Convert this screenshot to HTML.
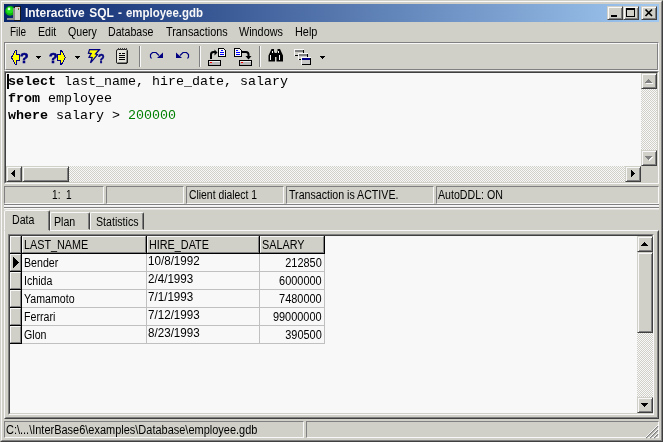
<!DOCTYPE html>
<html><head><meta charset="utf-8"><title>Interactive SQL - employee.gdb</title>
<style>
html,body{margin:0;padding:0;}
body{width:663px;height:442px;overflow:hidden;background:#d0d0c8;position:relative;font-family:"Liberation Sans",sans-serif;font-size:12.5px;color:#000;}
.a{position:absolute;box-sizing:border-box;}
.tx{position:absolute;white-space:nowrap;transform-origin:0 0;line-height:14px;height:14px;}
.chk{background-color:#d0d0c8;background-image:linear-gradient(45deg,#f8f8f8 25%,transparent 25%,transparent 75%,#f8f8f8 75%),linear-gradient(45deg,#f8f8f8 25%,transparent 25%,transparent 75%,#f8f8f8 75%);background-size:2px 2px;background-position:0 0,1px 1px;}
.btn{background:#d0d0c8;border:1px solid;border-color:#d0d0c8 #404040 #404040 #d0d0c8;box-shadow:inset 1px 1px 0 #f8f8f8,inset -1px -1px 0 #808080;}
.pan{border:1px solid;border-color:#808080 #f8f8f8 #f8f8f8 #808080;}
.mono{font-family:"Liberation Mono",monospace;font-size:13.333px;line-height:17px;white-space:pre;position:absolute;left:8px;}
.cell{position:absolute;height:17px;}
</style></head><body><div id="root" style="position:absolute;left:0;top:0;width:663px;height:442px;will-change:transform;">
<!-- window frame -->
<div class="a" style="left:0;top:0;width:663px;height:442px;border:1px solid;border-color:#d0d0c8 #404040 #404040 #d0d0c8;"></div>
<div class="a" style="left:1px;top:1px;width:661px;height:440px;border:1px solid;border-color:#f8f8f8 #808080 #808080 #f8f8f8;"></div>
<!-- title bar -->
<div class="a" style="left:4px;top:4px;width:655px;height:18px;background:linear-gradient(90deg,#08246a 0%,#a0c8f0 100%);"></div>
<div class="tx" id="title" style="left:24.8px;top:6px;color:#f8f8f8;font-weight:bold;transform:scaleX(.955);word-spacing:1.2px;">Interactive SQL -</div><div class="tx" id="title2" style="left:126px;top:6px;color:#f8f8f8;font-weight:bold;transform:scaleX(.915);">employee.gdb</div>
<div class="a btn" style="left:607px;top:6px;width:16px;height:14px;"></div>
<div class="a btn" style="left:623px;top:6px;width:16px;height:14px;"></div>
<div class="a btn" style="left:641px;top:6px;width:16px;height:14px;"></div>
<!-- menu -->
<div class="tx" id="m1" style="left:10.3px;top:25px;transform:scaleX(.8);">File</div>
<div class="tx" id="m2" style="left:38px;top:25px;transform:scaleX(.85);">Edit</div>
<div class="tx" id="m3" style="left:68px;top:25px;transform:scaleX(.85);">Query</div>
<div class="tx" id="m4" style="left:108px;top:25px;transform:scaleX(.85);">Database</div>
<div class="tx" id="m5" style="left:166px;top:25px;transform:scaleX(.868);">Transactions</div>
<div class="tx" id="m6" style="left:239px;top:25px;transform:scaleX(.865);">Windows</div>
<div class="tx" id="m7" style="left:295px;top:25px;transform:scaleX(.87);">Help</div>
<!-- toolbar frame -->
<div class="a" style="left:4px;top:42px;width:655px;height:29px;border:1px solid;border-color:#808080 #f8f8f8 #f8f8f8 #808080;"></div>
<div class="a" style="left:5px;top:43px;width:653px;height:27px;border:1px solid;border-color:#f8f8f8 #808080 #808080 #f8f8f8;"></div>
<!-- toolbar separators -->
<div class="a" style="left:139px;top:46px;width:2px;height:21px;border-left:1px solid #808080;border-right:1px solid #f8f8f8;"></div>
<div class="a" style="left:199px;top:46px;width:2px;height:21px;border-left:1px solid #808080;border-right:1px solid #f8f8f8;"></div>
<div class="a" style="left:259px;top:46px;width:2px;height:21px;border-left:1px solid #808080;border-right:1px solid #f8f8f8;"></div>
<!-- editor -->
<div class="a" style="left:4px;top:71px;width:655px;height:113px;border:1px solid;border-color:#808080 #f8f8f8 #f8f8f8 #808080;"></div>
<div class="a" style="left:5px;top:72px;width:653px;height:111px;border:1px solid;border-color:#404040 #d0d0c8 #d0d0c8 #404040;background:#f8f8f8;"></div>
<div class="a" style="left:7px;top:74px;width:2px;height:15px;background:#000;"></div>
<div class="mono" id="c1" style="top:73px;"><b>select</b> last_name, hire_date, salary</div>
<div class="mono" id="c2" style="top:90px;"><b>from</b> employee</div>
<div class="mono" id="c3" style="top:107px;"><b>where</b> salary &gt; <span style="color:#008000">200000</span></div>
<!-- editor v scroll -->
<div class="a chk" style="left:641px;top:73px;width:16px;height:93px;"></div>
<div class="a btn" style="left:641px;top:73px;width:16px;height:16px;"></div>
<div class="a btn" style="left:641px;top:150px;width:16px;height:16px;"></div>
<!-- editor h scroll -->
<div class="a chk" style="left:6px;top:166px;width:635px;height:16px;"></div>
<div class="a btn" style="left:6px;top:166px;width:16px;height:16px;"></div>
<div class="a btn" style="left:22px;top:166px;width:47px;height:16px;"></div>
<div class="a btn" style="left:625px;top:166px;width:16px;height:16px;"></div>
<div class="a" style="left:641px;top:166px;width:16px;height:16px;background:#d0d0c8;"></div>
<!-- status bar 1 -->
<div class="a pan" style="left:4px;top:186px;width:100px;height:18px;"></div>
<div class="a pan" style="left:106px;top:186px;width:78px;height:18px;"></div>
<div class="a pan" style="left:186px;top:186px;width:98px;height:18px;"></div>
<div class="a pan" style="left:286px;top:186px;width:148px;height:18px;"></div>
<div class="a pan" style="left:436px;top:186px;width:223px;height:18px;"></div>
<div class="tx" id="s1" style="left:51.5px;top:188px;transform:scaleX(.81);">1:&nbsp; 1</div>
<div class="tx" id="s2" style="left:189px;top:188px;transform:scaleX(.83);">Client dialect 1</div>
<div class="tx" id="s3" style="left:289px;top:188px;transform:scaleX(.85);">Transaction is ACTIVE.</div>
<div class="tx" id="s4" style="left:438px;top:188px;transform:scaleX(.85);">AutoDDL: ON</div>
<!-- splitter lines -->
<div class="a" style="left:4px;top:204px;width:655px;height:2px;border-top:1px solid #808080;border-bottom:1px solid #f8f8f8;"></div>
<div class="a" style="left:4px;top:206px;width:655px;height:3px;background:#f0f0ee;border-top:0;"></div>
<div class="a" style="left:4px;top:207px;width:655px;height:1px;background:#808080;"></div>
<div class="a" style="left:4px;top:208px;width:655px;height:1px;background:#f8f8f8;"></div><div class="a" style="left:4px;top:209px;width:655px;height:1px;background:#e4e2dc;"></div>
<!-- tab page -->
<div class="a" style="left:4px;top:230px;width:655px;height:189px;border:1px solid;border-color:#f8f8f8 #404040 #404040 #f8f8f8;"></div>
<div class="a" style="left:5px;top:231px;width:653px;height:187px;border:1px solid;border-color:#d0d0c8 #808080 #808080 #d0d0c8;"></div>
<!-- tabs -->
<div class="a" style="left:50px;top:212px;width:40px;height:18px;border:1px solid;border-color:#f8f8f8 #404040 transparent #f8f8f8;border-radius:2px 2px 0 0;box-shadow:inset -1px 0 0 #808080;"></div>
<div class="a" style="left:90px;top:212px;width:54px;height:18px;border:1px solid;border-color:#f8f8f8 #404040 transparent #f8f8f8;border-radius:2px 2px 0 0;box-shadow:inset -1px 0 0 #808080;"></div>
<div class="a" style="left:4px;top:210px;width:46px;height:21px;background:#d0d0c8;border:1px solid;border-color:#f8f8f8 #404040 transparent #f8f8f8;border-radius:2px 2px 0 0;box-shadow:inset -1px 0 0 #808080;"></div>
<div class="tx" id="t1" style="left:12px;top:213px;transform:scaleX(.85);">Data</div>
<div class="tx" id="t2" style="left:54.3px;top:215px;transform:scaleX(.85);">Plan</div>
<div class="tx" id="t3" style="left:96px;top:215px;transform:scaleX(.85);">Statistics</div>
<!-- grid -->
<div class="a" style="left:8px;top:234px;width:646px;height:181px;border:1px solid;border-color:#808080 #f8f8f8 #f8f8f8 #808080;"></div>
<div class="a" style="left:9px;top:235px;width:644px;height:179px;border:1px solid;border-color:#404040 #d0d0c8 #d0d0c8 #404040;background:#f8f8f8;"></div>
<!-- grid vscroll -->
<div class="a chk" style="left:637px;top:236px;width:16px;height:177px;"></div>
<div class="a btn" style="left:637px;top:236px;width:16px;height:16px;"></div>
<div class="a btn" style="left:637px;top:252px;width:16px;height:81px;"></div>
<div class="a btn" style="left:637px;top:397px;width:16px;height:16px;"></div>
<!-- grid header -->
<div id="grid"><div class="a" style="left:10px;top:236px;width:11px;height:17px;background:#d0d0c8;border:1px solid;border-color:#f8f8f8 #808080 #808080 #f8f8f8;box-shadow:1px 0 0 #000,0 1px 0 #000,1px 1px 0 #000;"></div>
<div class="a" style="left:22px;top:236px;width:124px;height:17px;background:#d0d0c8;border:1px solid;border-color:#f8f8f8 #808080 #808080 #f8f8f8;box-shadow:1px 0 0 #000,0 1px 0 #000,1px 1px 0 #000;"></div>
<div class="tx" id="h0" style="left:24px;top:238px;transform:scaleX(.865);">LAST_NAME</div>
<div class="a" style="left:147px;top:236px;width:112px;height:17px;background:#d0d0c8;border:1px solid;border-color:#f8f8f8 #808080 #808080 #f8f8f8;box-shadow:1px 0 0 #000,0 1px 0 #000,1px 1px 0 #000;"></div>
<div class="tx" id="h1" style="left:149px;top:238px;transform:scaleX(.865);">HIRE_DATE</div>
<div class="a" style="left:260px;top:236px;width:64px;height:17px;background:#d0d0c8;border:1px solid;border-color:#f8f8f8 #808080 #808080 #f8f8f8;box-shadow:1px 0 0 #000,0 1px 0 #000,1px 1px 0 #000;"></div>
<div class="tx" id="h2" style="left:262px;top:238px;transform:scaleX(.865);">SALARY</div>
<div class="a" style="left:10px;top:254px;width:11px;height:17px;background:#d0d0c8;border:1px solid;border-color:#f8f8f8 #808080 #808080 #f8f8f8;box-shadow:1px 0 0 #000,0 1px 0 #000,1px 1px 0 #000;"></div>
<div class="a" style="left:22px;top:254px;width:125px;height:18px;border-right:1px solid #c0c0c0;border-bottom:1px solid #c0c0c0;"></div>
<div class="a" style="left:147px;top:254px;width:113px;height:18px;border-right:1px solid #c0c0c0;border-bottom:1px solid #c0c0c0;"></div>
<div class="a" style="left:260px;top:254px;width:65px;height:18px;border-right:1px solid #c0c0c0;border-bottom:1px solid #c0c0c0;"></div>
<div class="tx" id="n0" style="left:24px;top:256px;transform:scaleX(.85);">Bender</div>
<div class="tx" id="d0" style="left:147.5px;top:254px;transform:scaleX(.93);">10/8/1992</div>
<div class="tx" id="v0" style="right:341px;top:256px;transform-origin:100% 0;transform:scaleX(.875);">212850</div>
<div class="a" style="left:10px;top:272px;width:11px;height:17px;background:#d0d0c8;border:1px solid;border-color:#f8f8f8 #808080 #808080 #f8f8f8;box-shadow:1px 0 0 #000,0 1px 0 #000,1px 1px 0 #000;"></div>
<div class="a" style="left:22px;top:272px;width:125px;height:18px;border-right:1px solid #c0c0c0;border-bottom:1px solid #c0c0c0;"></div>
<div class="a" style="left:147px;top:272px;width:113px;height:18px;border-right:1px solid #c0c0c0;border-bottom:1px solid #c0c0c0;"></div>
<div class="a" style="left:260px;top:272px;width:65px;height:18px;border-right:1px solid #c0c0c0;border-bottom:1px solid #c0c0c0;"></div>
<div class="tx" id="n1" style="left:24px;top:274px;transform:scaleX(.85);">Ichida</div>
<div class="tx" id="d1" style="left:147.5px;top:272px;transform:scaleX(.93);">2/4/1993</div>
<div class="tx" id="v1" style="right:341px;top:274px;transform-origin:100% 0;transform:scaleX(.875);">6000000</div>
<div class="a" style="left:10px;top:290px;width:11px;height:17px;background:#d0d0c8;border:1px solid;border-color:#f8f8f8 #808080 #808080 #f8f8f8;box-shadow:1px 0 0 #000,0 1px 0 #000,1px 1px 0 #000;"></div>
<div class="a" style="left:22px;top:290px;width:125px;height:18px;border-right:1px solid #c0c0c0;border-bottom:1px solid #c0c0c0;"></div>
<div class="a" style="left:147px;top:290px;width:113px;height:18px;border-right:1px solid #c0c0c0;border-bottom:1px solid #c0c0c0;"></div>
<div class="a" style="left:260px;top:290px;width:65px;height:18px;border-right:1px solid #c0c0c0;border-bottom:1px solid #c0c0c0;"></div>
<div class="tx" id="n2" style="left:24px;top:292px;transform:scaleX(.85);">Yamamoto</div>
<div class="tx" id="d2" style="left:147.5px;top:290px;transform:scaleX(.93);">7/1/1993</div>
<div class="tx" id="v2" style="right:341px;top:292px;transform-origin:100% 0;transform:scaleX(.875);">7480000</div>
<div class="a" style="left:10px;top:308px;width:11px;height:17px;background:#d0d0c8;border:1px solid;border-color:#f8f8f8 #808080 #808080 #f8f8f8;box-shadow:1px 0 0 #000,0 1px 0 #000,1px 1px 0 #000;"></div>
<div class="a" style="left:22px;top:308px;width:125px;height:18px;border-right:1px solid #c0c0c0;border-bottom:1px solid #c0c0c0;"></div>
<div class="a" style="left:147px;top:308px;width:113px;height:18px;border-right:1px solid #c0c0c0;border-bottom:1px solid #c0c0c0;"></div>
<div class="a" style="left:260px;top:308px;width:65px;height:18px;border-right:1px solid #c0c0c0;border-bottom:1px solid #c0c0c0;"></div>
<div class="tx" id="n3" style="left:24px;top:310px;transform:scaleX(.85);">Ferrari</div>
<div class="tx" id="d3" style="left:147.5px;top:308px;transform:scaleX(.93);">7/12/1993</div>
<div class="tx" id="v3" style="right:341px;top:310px;transform-origin:100% 0;transform:scaleX(.875);">99000000</div>
<div class="a" style="left:10px;top:326px;width:11px;height:17px;background:#d0d0c8;border:1px solid;border-color:#f8f8f8 #808080 #808080 #f8f8f8;box-shadow:1px 0 0 #000,0 1px 0 #000,1px 1px 0 #000;"></div>
<div class="a" style="left:22px;top:326px;width:125px;height:18px;border-right:1px solid #c0c0c0;border-bottom:1px solid #c0c0c0;"></div>
<div class="a" style="left:147px;top:326px;width:113px;height:18px;border-right:1px solid #c0c0c0;border-bottom:1px solid #c0c0c0;"></div>
<div class="a" style="left:260px;top:326px;width:65px;height:18px;border-right:1px solid #c0c0c0;border-bottom:1px solid #c0c0c0;"></div>
<div class="tx" id="n4" style="left:24px;top:328px;transform:scaleX(.85);">Glon</div>
<div class="tx" id="d4" style="left:147.5px;top:326px;transform:scaleX(.93);">8/23/1993</div>
<div class="tx" id="v4" style="right:341px;top:328px;transform-origin:100% 0;transform:scaleX(.875);">390500</div>
<svg class="a" style="left:13px;top:257px;" width="6" height="11" shape-rendering="crispEdges"><path d="M0 0L6 5.5L0 11Z" fill="#000"/></svg></div><!--endgrid-->
<!-- bottom status bar -->
<div class="a pan" style="left:4px;top:421px;width:300px;height:17px;"></div>
<div class="a pan" style="left:306px;top:421px;width:353px;height:17px;"></div>
<div class="tx" id="b1" style="left:6px;top:423px;transform:scaleX(.878);">C:\...\InterBase6\examples\Database\employee.gdb</div>
<!--ICONS--><svg class="a" style="left:0;top:0;pointer-events:none;" width="663" height="442" viewBox="0 0 663 442" shape-rendering="crispEdges">
<!-- title icon -->
<g>
<rect x="7" y="18" width="7" height="2" fill="#909090"/>
<circle cx="10.1" cy="10.9" r="4.9" fill="#0cb40c" shape-rendering="auto"/><circle cx="9.7" cy="10.3" r="3.3" fill="#20e020" shape-rendering="auto"/>
<circle cx="9" cy="8.9" r="1.3" fill="#e0ffe0" shape-rendering="auto"/>
<rect x="14" y="6" width="7" height="15" fill="#181818"/>
<rect x="13" y="8" width="2" height="12" fill="#8c8c8c"/>
<rect x="15" y="7" width="5" height="13" fill="#d0d0cc"/>
<rect x="18" y="8" width="1" height="1" fill="#d03030"/>
<rect x="18" y="9" width="1" height="1" fill="#30a030"/>
</g>
<!-- title buttons glyphs -->
<rect x="611" y="15" width="6" height="2" fill="#000"/>
<rect x="626" y="8" width="8" height="8" fill="none" stroke="#000" stroke-width="1" transform="translate(.5 .5)"/>
<rect x="626" y="8" width="9" height="2" fill="#000"/>
<path d="M645 9L651.5 15.5M651.5 9L645 15.5" stroke="#000" stroke-width="1.7" fill="none" shape-rendering="auto" transform="translate(.5 .5)"/>
<!-- icon1: yellow left arrow + ? -->
<path id="larr" d="M11.5 57.5L15.5 50.5L16.5 50.5L16.5 54.5L19.5 54.5L19.5 60.5L16.5 60.5L16.5 64.5L15.5 64.5Z" fill="#ffff00" stroke="#000080" stroke-width="1"/>
<path d="M36 56h5v1h-1v1h-1v1h-1v-1h-1v-1h-1z" fill="#000"/>
<!-- icon2 -->
<g transform="translate(77 0) scale(-1 1)"><path d="M11.5 57.5L15.5 50.5L16.5 50.5L16.5 54.5L19.5 54.5L19.5 60.5L16.5 60.5L16.5 64.5L15.5 64.5Z" fill="#ffff00" stroke="#000080" stroke-width="1"/></g>
<path d="M75 56h5v1h-1v1h-1v1h-1v-1h-1v-1h-1z" fill="#000"/>
<!-- icon3 lightning -->
<path d="M89.5 49.5L99.5 49.5L95.5 54L97.5 54.6L90.5 62.8L92.2 57.6L89 57.2L91.2 53.6L88.4 53.2Z" fill="#ffff00" stroke="#000080" stroke-width="1.25" stroke-linejoin="miter" shape-rendering="auto"/>
<!-- notepad -->
<rect x="116.5" y="49.5" width="11" height="14" rx="1.5" fill="#e4e4dc" stroke="#202020" shape-rendering="auto"/>
<path d="M127.25 51v12M118 63.250h9" stroke="#202020" stroke-width="1.4" fill="none" shape-rendering="auto"/>
<path d="M118.500 48v2M120.500 48v2M122.500 48v2M124.500 48v2M126.500 48v2" stroke="#404040" stroke-width="1"/>
<path d="M119 53.5h2M122 53.5h3M119 55.5h6M119 57.5h6M119 59.5h6" stroke="#000" stroke-width="1"/>
<!-- redo / undo -->
<g id="redo"><path d="M151.5 58.5L150.5 57L150.5 54.5L152.5 52.5L156 52.5L159 55.5" fill="none" stroke="#000080" stroke-width="1.2" shape-rendering="auto"/>
<path d="M163 52.5L163 58L157 58Z" fill="#000080" shape-rendering="auto"/></g>
<g transform="translate(339 0) scale(-1 1)"><path d="M151.5 58.5L150.5 57L150.5 54.5L152.5 52.5L156 52.5L159 55.5" fill="none" stroke="#000080" stroke-width="1.2" shape-rendering="auto"/>
<path d="M163 52.5L163 58L157 58Z" fill="#000080" shape-rendering="auto"/></g>
<!-- load script -->
<rect x="208.5" y="60.5" width="12" height="5" fill="#b8b8b8" stroke="#000"/>
<rect x="209" y="61" width="11" height="1" fill="#f0f0f0"/>
<rect x="210" y="62" width="2" height="1" fill="#ff0000"/>
<path d="M211 59v-4.5q0 -2.5 2.500 -2.500h2" fill="none" stroke="#000" stroke-width="2" shape-rendering="auto"/>
<path d="M214.500 49.500L217.500 52.500L214.500 55.500Z" fill="#000" shape-rendering="auto"/>
<path d="M218.500 48.500h5l2 2v6h-7z" fill="#f8f8f8" stroke="#000"/>
<path d="M221 50.500h2M220 52.500h4M220 54.500h4" stroke="#0000ff"/>
<!-- save script -->
<path d="M234.500 48.500h5l2 2v6h-7z" fill="#f8f8f8" stroke="#000"/>
<path d="M236 50.500h2M236 52.500h4M236 54.500h4" stroke="#0000ff"/>
<path d="M242 52h4q2.500 0 2.500 2.500v2" fill="none" stroke="#000" stroke-width="2" shape-rendering="auto"/>
<path d="M245.500 56L251.500 56L248.500 59.500Z" fill="#000" shape-rendering="auto"/>
<rect x="239.500" y="60.500" width="12" height="5" fill="#b8b8b8" stroke="#000"/>
<rect x="240" y="61" width="11" height="1" fill="#f0f0f0"/>
<rect x="241" y="62" width="2" height="1" fill="#ff0000"/>
<!-- binoculars -->
<g fill="#000" shape-rendering="auto">
<path d="M271.500 49h2.500v2.500l1 2v8h-6.500v-6z"/>
<path d="M277.500 49h2.500l3 6.500v6h-6.500v-8l1 -2z"/>
<rect x="274" y="53" width="3" height="4"/>
</g>
<rect x="272" y="51" width="1" height="2" fill="#f8f8f8"/><rect x="278" y="51" width="1" height="2" fill="#f8f8f8"/>
<rect x="270" y="55" width="1" height="5" fill="#f8f8f8"/><rect x="279" y="55" width="1" height="5" fill="#f8f8f8"/>
<!-- windows -->
<g>
<rect x="294" y="49" width="10" height="7" fill="#f8f8f8"/><rect x="295" y="50" width="9" height="6" fill="#000"/><rect x="295" y="50" width="8" height="5" fill="#d0d0c8"/><rect x="295" y="50" width="8" height="2" fill="#808080"/>
<rect x="298" y="53" width="10" height="7" fill="#f8f8f8"/><rect x="299" y="54" width="9" height="6" fill="#000"/><rect x="299" y="54" width="8" height="5" fill="#d0d0c8"/><rect x="299" y="54" width="8" height="2" fill="#808080"/>
<rect x="301" y="57" width="10" height="8" fill="#f8f8f8"/><rect x="302" y="58" width="9" height="7" fill="#000"/><rect x="302" y="58" width="8" height="6" fill="#c8c8c8"/><rect x="302" y="58" width="8" height="2" fill="#000080"/>
</g>
<path d="M320 56h5v1h-1v1h-1v1h-1v-1h-1v-1h-1z" fill="#000"/>
<!-- scroll arrows -->
<!-- editor up (disabled) -->
<path d="M649 80h1v1h1v1h1v1h1v1h-7v-1h1v-1h1v-1h1z" fill="#f8f8f8"/>
<path d="M648 79h1v1h1v1h1v1h1v1h-7v-1h1v-1h1v-1h1z" fill="#808080"/>
<!-- editor down (disabled) -->
<path d="M646 157h7v1h-1v1h-1v1h-1v1h-1v-1h-1v-1h-1v-1h-1z" fill="#f8f8f8"/>
<path d="M645 156h7v1h-1v1h-1v1h-1v1h-1v-1h-1v-1h-1v-1h-1z" fill="#808080"/>
<!-- editor left -->
<path d="M15 170v7h-1v-1h-1v-1h-1v-1h-1v-1h1v-1h1v-1h1v-1z" fill="#000"/>
<!-- editor right -->
<path d="M631 170v7h1v-1h1v-1h1v-1h1v-1h-1v-1h-1v-1h-1v-1z" fill="#000"/>
<!-- grid up -->
<path d="M644 242h1v1h1v1h1v1h1v1h-7v-1h1v-1h1v-1h1z" fill="#000"/>
<!-- grid down -->
<path d="M641 403h7v1h-1v1h-1v1h-1v1h-1v-1h-1v-1h-1v-1h-1z" fill="#000"/>
<!-- size grip -->
<g shape-rendering="auto">
<path d="M646 438L658 426M650 438L658 430M654 438L658 434" stroke="#808080" stroke-width="1.4"/>
<path d="M645 438L658 425M649 438L658 429M653 438L658 433" stroke="#f8f8f8" stroke-width="1"/>
</g>
</svg>
<div class="tx" style="left:20px;top:51px;font-size:14px;font-weight:bold;color:#000080;line-height:14px;-webkit-text-stroke:.6px #000080;">?</div>
<div class="tx" style="left:49px;top:51px;font-size:14px;font-weight:bold;color:#000080;line-height:14px;-webkit-text-stroke:.6px #000080;">?</div>
<div class="tx" style="left:98px;top:51.500px;font-size:13.500px;font-weight:bold;color:#000080;line-height:14px;-webkit-text-stroke:.6px #000080;transform:scaleX(.8)">?</div>
<!--/ICONS-->
</div></body></html>
